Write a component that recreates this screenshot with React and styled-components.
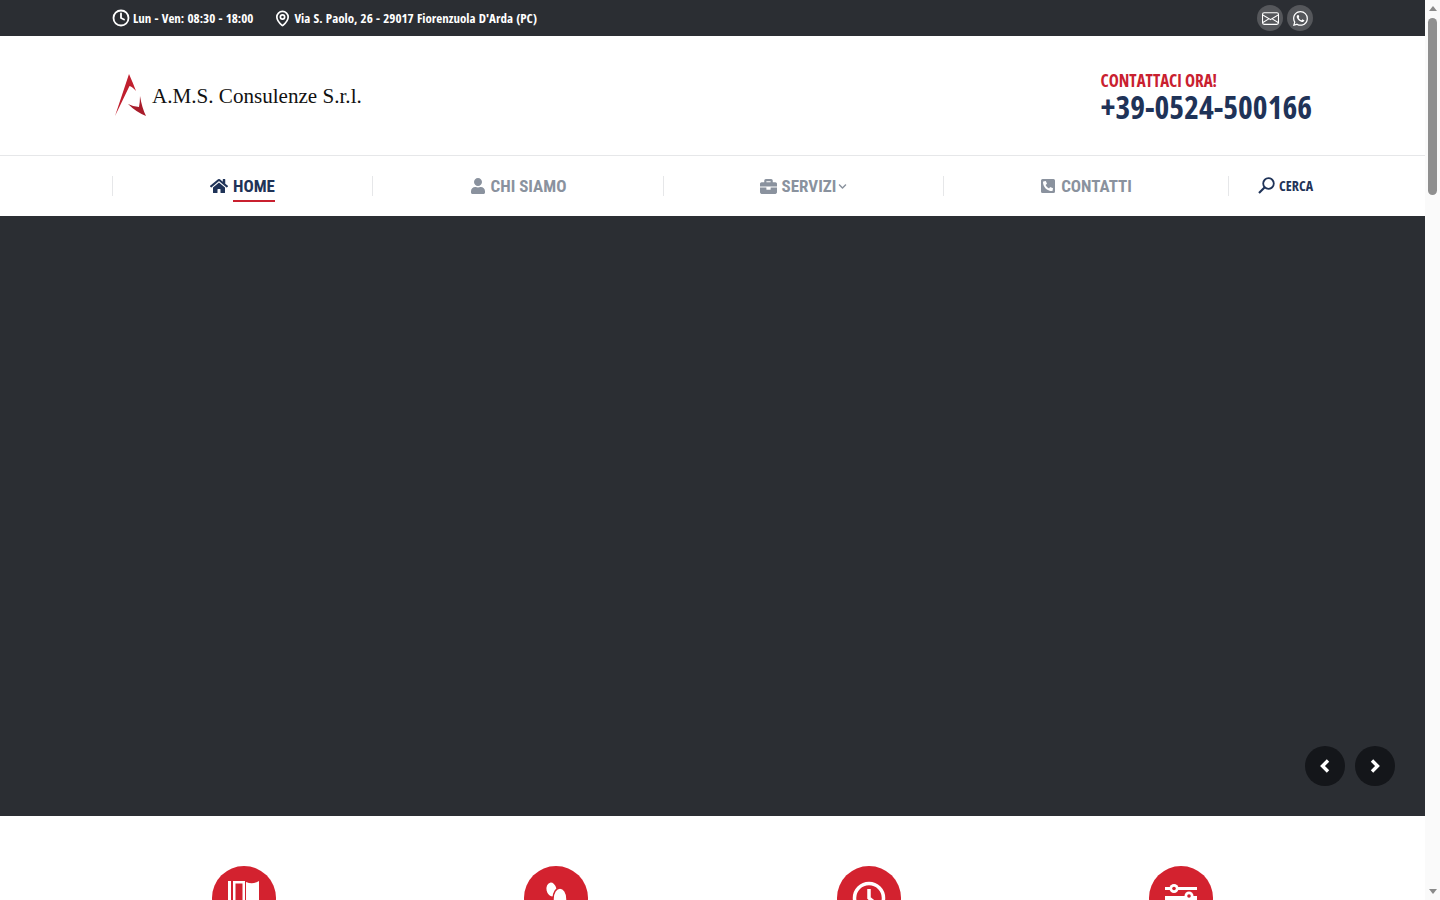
import React from 'react'
import styled, { createGlobalStyle } from 'styled-components'
import { FaHome, FaUser, FaBriefcase, FaPhoneSquareAlt, FaChevronDown } from 'react-icons/fa'
import { BsEnvelope, BsWhatsapp } from 'react-icons/bs'
import { Clock, MapPin } from 'lucide-react'

const GlobalStyle = createGlobalStyle`
  body {
    margin: 0;
    background: #fff;
    font-family: "Open Sans", sans-serif;
  }
`

const navItems = [
  { label: 'HOME', icon: <FaHome size={18} />, active: true },
  { label: 'CHI SIAMO', icon: <FaUser size={16} /> },
  { label: 'SERVIZI', icon: <FaBriefcase size={17} />, caret: true },
  { label: 'CONTATTI', icon: <FaPhoneSquareAlt size={16} /> },
]

export default function App() {
  return (
    <Shell>
      <GlobalStyle />
      <Page>
        <TopBar>
          <TopInfo>
            <InfoItem><Clock size={18} strokeWidth={2.4} /><span>Lun - Ven: 08:30 - 18:00</span></InfoItem>
            <InfoItem><MapPin size={17} strokeWidth={2.4} /><span>Via S. Paolo, 26 - 29017 Fiorenzuola D'Arda (PC)</span></InfoItem>
          </TopInfo>
          <Socials>
            <SocialLink><BsEnvelope size={17} /></SocialLink>
            <SocialLink><BsWhatsapp size={15} /></SocialLink>
          </Socials>
        </TopBar>

        <Masthead>
          <Logo>
            <LogoMark viewBox="0 0 33 44">
              <path d="M15 0 Q19 9 22 17 Q18 12.5 15.5 12 L1 42 Z" fill="#c01f2e" />
              <path d="M26 22 Q28 34 32 42 Q22 38 14 30 Q20 33 25 33 Q26 28 26 22 Z" fill="#a81c2a" />
            </LogoMark>
            <LogoText>A.M.S. Consulenze S.r.l.</LogoText>
          </Logo>
          <Contact>
            <ContactLabel>CONTATTACI ORA!</ContactLabel>
            <Phone>+39-0524-500166</Phone>
          </Contact>
        </Masthead>

        <Nav>
          {navItems.map((item) => (
            <NavCell key={item.label}>
              <NavLink $active={item.active}>
                {item.icon}
                <NavLabel $active={item.active}>{item.label}</NavLabel>
                {item.caret && <Caret size={9} />}
              </NavLink>
            </NavCell>
          ))}
          <SearchCell>
            <svg width="17" height="17" viewBox="0 0 17 17" fill="none" stroke="#1f3358" strokeWidth="1.8">
              <circle cx="10.5" cy="6.5" r="5.3" />
              <path d="M6.5 10.5 L1 16" strokeWidth="2.2" />
            </svg>
            <span>CERCA</span>
          </SearchCell>
        </Nav>

        <Slider>
          <SliderArrows>
            <ArrowButton>
              <svg width="12" height="14" viewBox="0 0 12 14" fill="none" stroke="#fff" strokeWidth="3.4">
                <path d="M9 1.5 L3.5 7 L9 12.5" />
              </svg>
            </ArrowButton>
            <ArrowButton>
              <svg width="12" height="14" viewBox="0 0 12 14" fill="none" stroke="#fff" strokeWidth="3.4">
                <path d="M3 1.5 L8.5 7 L3 12.5" />
              </svg>
            </ArrowButton>
          </SliderArrows>
        </Slider>

        <Features>
          <Feature>
            <FeatureIcon>
              <svg width="34" height="34" viewBox="0 0 34 34" fill="#fff">
                <path d="M1 0 h3 v30 h-3 z" />
                <path d="M6 0 h12 v26 h-12 z M8.5 2.5 v21 h7 v-21 z" fillRule="evenodd" />
                <path d="M19 1 q7 3 13 -1 v26 q-6 3 -13 0 z" />
              </svg>
            </FeatureIcon>
          </Feature>
          <Feature>
            <FeatureIcon>
              <svg width="34" height="34" viewBox="0 0 34 34" fill="#fff">
                <ellipse cx="12.5" cy="8.5" rx="5" ry="7" transform="rotate(-12 12.5 8.5)" />
                <ellipse cx="21" cy="18" rx="7" ry="11" stroke="#d3222f" strokeWidth="1.5" />
              </svg>
            </FeatureIcon>
          </Feature>
          <Feature>
            <FeatureIcon>
              <svg width="34" height="34" viewBox="0 0 34 34" fill="none" stroke="#fff" strokeWidth="3.5">
                <circle cx="17" cy="17" r="14.5" />
                <path d="M17 8 v9 l6 5" />
              </svg>
            </FeatureIcon>
          </Feature>
          <Feature>
            <FeatureIcon>
              <svg width="34" height="34" viewBox="0 0 34 34" fill="#fff">
                <path d="M1 6 h32 v3 h-32 z M1 15 h32 v19 h-32 z" />
                <circle cx="10" cy="7.5" r="4.5" />
                <circle cx="10" cy="7.5" r="1.8" fill="#d3222f" />
                <circle cx="25" cy="15" r="4.5" />
                <circle cx="25" cy="15" r="1.8" fill="#d3222f" />
              </svg>
            </FeatureIcon>
          </Feature>
        </Features>
      </Page>

      <Scrollbar>
        <ScrollArrow $up />
        <ScrollThumb />
        <ScrollArrow />
      </Scrollbar>
    </Shell>
  )
}

const Shell = styled.div`
  display: flex;
  height: 100vh;
  overflow: hidden;
`

const Page = styled.div`
  flex: 1;
  min-width: 0;
`

const Scrollbar = styled.aside`
  width: 15px;
  flex: none;
  background: #fafafa;
  display: flex;
  flex-direction: column;
  justify-content: space-between;
  align-items: center;
  padding: 6px 0;
  box-sizing: border-box;
  position: relative;
`

const ScrollArrow = styled.div`
  width: 0;
  height: 0;
  border-left: 4.5px solid transparent;
  border-right: 4.5px solid transparent;
  ${(props) => (props.$up ? 'border-bottom: 5px solid #8a8a8a;' : 'border-top: 5px solid #8a8a8a;')}
`

const ScrollThumb = styled.div`
  position: absolute;
  top: 18px;
  left: 3px;
  width: 9px;
  height: 177px;
  border-radius: 5px;
  background: #8f8f8f;
`

const TopBar = styled.div`
  height: 36px;
  background: #2b2e33;
  padding: 0 112px;
  display: flex;
  align-items: center;
  justify-content: space-between;
  color: #fff;
`

const TopInfo = styled.div`
  display: flex;
  gap: 21px;
`

const InfoItem = styled.div`
  display: flex;
  align-items: center;
  gap: 3px;
  font-size: 13px;
  font-weight: 700;
  font-stretch: 79%;
  word-spacing: 0.9px;
`

const Socials = styled.div`
  display: flex;
  gap: 4px;
`

const SocialLink = styled.a`
  width: 26px;
  height: 26px;
  border-radius: 50%;
  background: #55575b;
  color: #fff;
  display: flex;
  align-items: center;
  justify-content: center;
`

const Masthead = styled.div`
  height: 119px;
  padding: 0 112px 0 114px;
  display: flex;
  align-items: center;
  justify-content: space-between;
  border-bottom: 1px solid #e6e7e9;
`

const Logo = styled.div`
  display: flex;
  align-items: center;
  gap: 5px;
`

const LogoMark = styled.svg`
  width: 33px;
  height: 44px;
`

const LogoText = styled.div`
  font-family: "Liberation Serif", serif;
  font-size: 21.1px;
  color: #111;
  margin-top: 2px;
`

const Contact = styled.div`
  display: flex;
  flex-direction: column;
  padding-top: 3px;
  margin-right: 1px;
`

const ContactLabel = styled.div`
  font-size: 17px;
  line-height: 20px;
  font-weight: 700;
  font-stretch: condensed;
  color: #c9202f;
`

const Phone = styled.div`
  font-size: 31.5px;
  line-height: 32px;
  font-weight: 700;
  font-stretch: condensed;
  color: #1f3358;
`

const Nav = styled.nav`
  height: 60px;
  padding: 0 112px;
  display: grid;
  grid-template-columns: 260px 291px 280px 285px 85px;
  align-items: center;
`

const NavCell = styled.div`
  height: 20px;
  border-left: 1px solid #e6e7e9;
  display: flex;
  align-items: center;
  justify-content: center;
`

const NavLink = styled.a`
  display: flex;
  align-items: center;
  gap: 5px;
  color: ${(props) => (props.$active ? '#1f3358' : '#8a929e')};
  font-family: Roboto, sans-serif;
  font-size: 17px;
  font-weight: 700;
  font-stretch: condensed;
`

const NavLabel = styled.span`
  position: relative;
  &::after {
    content: '';
    display: ${(props) => (props.$active ? 'block' : 'none')};
    position: absolute;
    left: 0;
    right: 0;
    bottom: -6px;
    height: 2px;
    background: #c9202f;
  }
`

const Caret = styled(FaChevronDown)`
  margin-left: -3px;
`

const SearchCell = styled.div`
  height: 20px;
  padding-bottom: 2px;
  box-sizing: border-box;
  border-left: 1px solid #e6e7e9;
  display: flex;
  align-items: center;
  justify-content: flex-end;
  gap: 4px;
  color: #1f3358;
  font-size: 14px;
  font-weight: 700;
  font-stretch: condensed;
`

const Slider = styled.div`
  height: 600px;
  background: #2b2e33;
  display: flex;
  align-items: flex-end;
  justify-content: flex-end;
  padding: 0 30px 30px 0;
  box-sizing: border-box;
`

const SliderArrows = styled.div`
  display: flex;
  gap: 10px;
`

const ArrowButton = styled.button`
  width: 40px;
  height: 40px;
  border: none;
  padding: 0;
  border-radius: 50%;
  background: #14161a;
  display: flex;
  align-items: center;
  justify-content: center;
`

const Features = styled.section`
  padding: 50px 112px 0;
  display: grid;
  grid-template-columns: repeat(4, 264px);
  column-gap: 48.4px;
`

const Feature = styled.div`
  display: flex;
  justify-content: center;
`

const FeatureIcon = styled.div`
  width: 64px;
  height: 64px;
  border-radius: 50%;
  background: #d3222f;
  display: flex;
  align-items: center;
  justify-content: center;
`
